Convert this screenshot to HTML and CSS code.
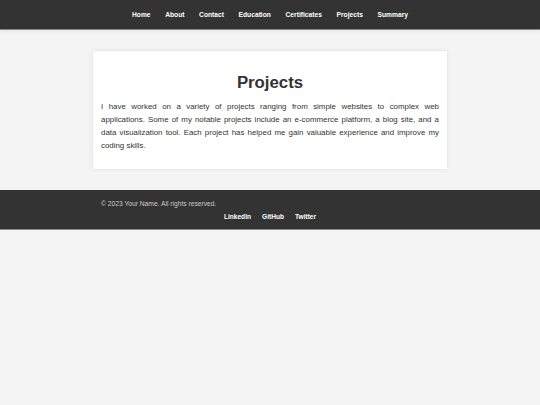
FILE: index.html
```html
<!DOCTYPE html>
<html lang="en">
<head>
<meta charset="utf-8">
<title>Projects</title>
<link rel="stylesheet" href="styles.css">
</head>
<body>
<header class="site-header">
  <nav class="nav">
    <a href="#">Home</a>
    <a href="#">About</a>
    <a href="#">Contact</a>
    <a href="#">Education</a>
    <a href="#">Certificates</a>
    <a href="#">Projects</a>
    <a href="#">Summary</a>
  </nav>
</header>
<main class="main">
  <section class="card">
    <h2 class="card-title">Projects</h2>
    <p class="card-text">I have worked on a variety of projects ranging from simple websites to complex web applications. Some of my notable projects include an e-commerce platform, a blog site, and a data visualization tool. Each project has helped me gain valuable experience and improve my coding skills.</p>
  </section>
</main>
<footer class="site-footer">
  <div class="footer-inner">
    <p class="copy">&copy; 2023 Your Name. All rights reserved.</p>
    <div class="social">
      <a href="#">LinkedIn</a>
      <a href="#">GitHub</a>
      <a href="#">Twitter</a>
    </div>
  </div>
</footer>
</body>
</html>
```
FILE: styles.css
```css
* { box-sizing: border-box; }
html, body { margin: 0; padding: 0; }
body {
  background: #f4f4f4;
  font-family: "Liberation Sans", Arial, sans-serif;
  color: #333;
}
.site-header {
  background: #333;
  height: 30px;
  border-bottom: 1px solid #8a8a8a;
  box-shadow: 0 1px 3px rgba(0,0,0,0.08);
  display: flex;
  align-items: center;
  justify-content: center;
}
.nav {
  display: flex;
  gap: 14.6px;
}
.nav a {
  color: #fff;
  text-decoration: none;
  font-weight: bold;
  font-size: 6.7px;
}
.main {
  padding: 21px 0 21px;
}
.card {
  width: 354px;
  margin: 0 auto;
  background: #fff;
  padding: 20px 8px 17px;
  box-shadow: 0 0 4px rgba(0,0,0,0.1);
}
.card-title {
  margin: 0 0 5px;
  text-align: center;
  font-size: 16.8px;
  line-height: 24px;
  font-weight: bold;
  color: #333;
}
.card-text {
  margin: 0;
  font-size: 7.9px;
  line-height: 13px;
  text-align: justify;
  color: #333;
}
.site-footer {
  background: #333;
  height: 40px;
  border-bottom: 1px solid #8a8a8a;
}
.footer-inner {
  width: 354px;
  margin: 0 auto;
  padding: 9px 8px 0;
}
.copy {
  margin: 0;
  font-size: 6.7px;
  line-height: 9px;
  color: #ccc;
}
.social {
  display: flex;
  justify-content: center;
  gap: 11px;
  margin-top: 4px;
  width: 540px;
  margin-left: -101px;
}
.social a {
  color: #fff;
  text-decoration: none;
  font-weight: bold;
  font-size: 6.6px;
  line-height: 9px;
}
```
